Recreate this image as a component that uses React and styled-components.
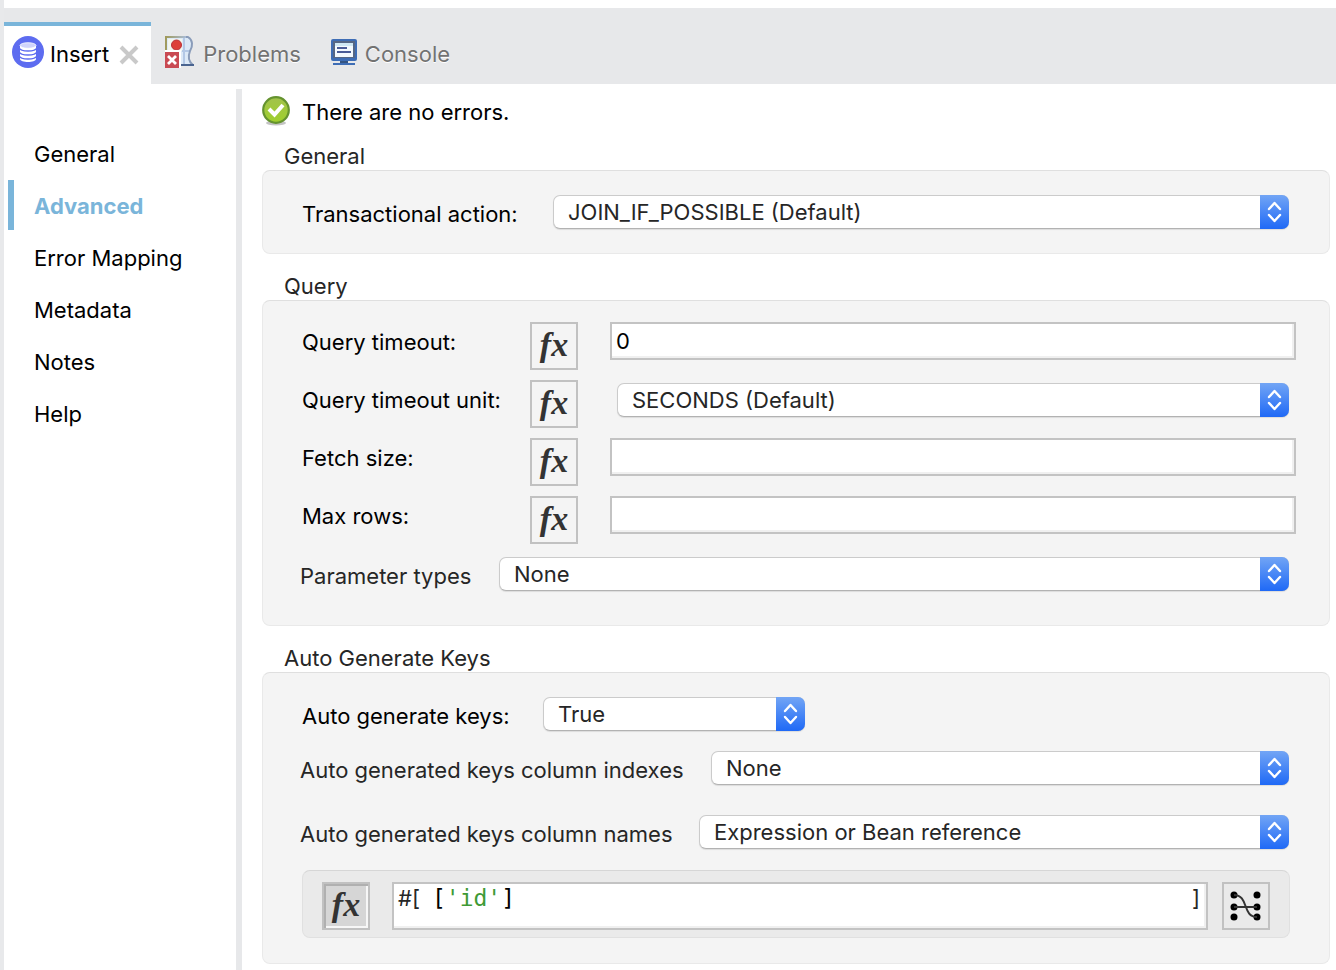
import React, { useId } from "react";
import styled, { createGlobalStyle, css } from "styled-components";

const GlobalStyle = createGlobalStyle`
  *, *::before, *::after { box-sizing: border-box; }
  html, body, #root { min-height: 100vh; }
  body {
    margin: 0;
    background: #fff;
    color: #000;
    font: 22px/28px Inter, "Liberation Sans", sans-serif;
  }
  button, input, select { font: inherit; color: inherit; margin: 0; }
`;

const Page = styled.div`
  display: flex;
  flex-direction: column;
  min-height: 100vh;
  padding-top: 8px;
  border-left: 4px solid #e8e9eb;
`;

const TabBar = styled.div`
  display: flex;
  align-items: flex-end;
  height: 76px;
  flex: none;
  background: #e7e8ea;
`;

const Tab = styled.div`
  display: flex;
  align-items: center;
  gap: 10px;
  height: 62px;
  padding: ${(p) => (p.$active ? "0 12px 6px 8px" : "0 16px 6px 14px")};
  border-top: 4px solid ${(p) => (p.$active ? "#7ab5da" : "transparent")};
  background: ${(p) => (p.$active ? "#fff" : "transparent")};
  svg { flex: none; }
`;

const TabButton = styled.button`
  display: flex;
  align-items: center;
  gap: ${(p) => (p.$active ? "6px" : "8px")};
  padding: 0;
  border: 0;
  background: none;
  color: ${(p) => (p.$active ? "#000" : "#727272")};
  text-shadow: ${(p) => (p.$active ? "none" : "0 1px 0 #fff")};
`;

const TabLabel = styled.span`
  padding-top: 4px;
`;

const CloseButton = styled.button`
  display: flex;
  padding: 6px 0 0;
  border: 0;
  background: none;
`;

const Body = styled.div`
  display: flex;
  flex: 1;
  padding-top: 5px;
`;

const Sidebar = styled.nav`
  display: flex;
  flex-direction: column;
  flex: none;
  gap: 2px;
  width: 232px;
  padding: 39px 4px 0;
`;

const NavLink = styled.a`
  height: 50px;
  padding: 12px 20px;
  border-left: 6px solid ${(p) => (p.$active ? "#7ab5da" : "transparent")};
  color: ${(p) => (p.$active ? "#7ab5da" : "#000")};
  font-weight: ${(p) => (p.$active ? 700 : 400)};
  text-decoration: none;
`;

const Content = styled.main`
  flex: 1;
  min-width: 0;
  padding: 6px 6px 6px 20px;
  border-left: 6px solid #e7e8ea;
`;

const Status = styled.p`
  display: flex;
  align-items: center;
  gap: 12px;
  height: 34px;
  margin: 0 0 11px;
  svg { flex: none; margin-bottom: 2px; }
`;

const Group = styled.fieldset`
  min-width: 0;
  margin: 0 0 16px;
  padding: 0;
  border: 0;
  &:last-child { margin-bottom: 0; }
`;

const GroupTitle = styled.legend`
  height: 30px;
  padding: 0 22px;
  color: #262626;
  line-height: 32px;
`;

const Panel = styled.div`
  display: flex;
  flex-direction: column;
  gap: ${(p) => p.$gap || 0}px;
  padding: ${(p) => p.$pad};
  border: 1px solid #e9e9e9;
  border-top-color: #dfdfdf;
  border-radius: 8px;
  background: #f4f4f4;
`;

const FxRows = styled.div`
  display: flex;
  flex-direction: column;
  gap: 10px;
`;

const Row = styled.div`
  display: flex;
  align-items: ${(p) => (p.$top ? "flex-start" : "center")};
  height: ${(p) => (p.$top ? 48 : 36)}px;
  margin-top: ${(p) => p.$before || 0}px;
  padding-right: ${(p) => (p.$wide ? 0 : 7)}px;
`;

const Label = styled.label`
  flex: none;
  width: ${(p) => p.$w}px;
  padding-left: ${(p) => (p.$soft ? 0 : 2)}px;
  padding-top: ${(p) => (p.$top ? 6 : 4)}px;
  color: ${(p) => (p.$soft ? "#262626" : "#000")};
  white-space: nowrap;
`;

const SelectWrap = styled.span`
  display: flex;
  position: relative;
  flex: ${(p) => (p.$w ? "none" : "1")};
  width: ${(p) => (p.$w ? p.$w + "px" : "auto")};
  min-width: 0;
  height: 34px;
  margin: ${(p) => (p.$inset ? "3px 7px 0 7px" : "0")};
`;

const NativeSelect = styled.select`
  appearance: none;
  width: 100%;
  height: 34px;
  padding: 0 40px 0 14px;
  border: 1px solid #cbcbcb;
  border-bottom-color: #b2b2b2;
  border-radius: 7px;
  background: #fff;
  box-shadow: 0 1px 1px #0000001a;
  color: #262626;
`;

const Stepper = styled.span`
  position: absolute;
  top: 0;
  right: 0;
  display: flex;
  align-items: center;
  justify-content: center;
  width: 29px;
  height: 34px;
  border-radius: 0 7px 7px 0;
  background: linear-gradient(#72a5f5, #1f69f6);
  pointer-events: none;
`;

const field = css`
  border: 2px solid #c3c3c3;
  background: #fff;
  box-shadow: inset -2px -2px 0 #f0f0f0;
`;

const TextInput = styled.input`
  flex: 1;
  min-width: 0;
  height: 38px;
  padding: 0 4px;
  border-radius: 0;
  ${field}
`;

const SquareButton = styled.button`
  display: flex;
  align-items: center;
  justify-content: center;
  flex: none;
  width: 48px;
  height: 48px;
  padding: 0;
  border: 2px solid #c1c1c1;
  background: ${(p) => (p.$pressed ? "#d6d6d6" : "transparent")};
  box-shadow: ${(p) => (p.$pressed ? "inset 2px 2px 0 #b0b0b0, inset -2px -2px 0 #f7f7f7" : "none")};
  color: #333;
  margin-right: ${(p) => p.$after || 0}px;
`;

const FxText = styled.span`
  padding-bottom: 2px;
  font: italic 700 34px/38px "Liberation Serif", serif;
`;

const ExpressionBar = styled.div`
  display: flex;
  align-items: center;
  height: 68px;
  margin: 2px 6px 0 2px;
  padding: 3px 19px 0;
  border: 1px solid #e0e0e0;
  border-top-color: #d6d6d6;
  border-radius: 8px;
  background: #eaeaea;
`;

const ExpressionField = styled.div`
  display: flex;
  flex: 1;
  min-width: 0;
  height: 48px;
  margin-right: 14px;
  padding: 0 6px 0 4px;
  color: #262626;
  ${field}
`;

const ExpressionCode = styled.code`
  flex: 1;
  padding-left: 12px;
  color: #000;
  font: 23px/28px "DejaVu Sans Mono", monospace;
`;

const StringToken = styled.span`
  color: #3f9a35;
`;

function FxButton({ pressed, after }) {
  return (
    <SquareButton type="button" aria-label="Toggle expression" $pressed={pressed} $after={after}>
      <FxText>fx</FxText>
    </SquareButton>
  );
}

function Select({ id, value, w, inset }) {
  return (
    <SelectWrap $w={w} $inset={inset}>
      <NativeSelect id={id} defaultValue={value}>
        <option>{value}</option>
      </NativeSelect>
      <Stepper>
        <svg width="15" height="22" viewBox="0 0 15 22" fill="none" stroke="#fff" strokeWidth="2.4" strokeLinecap="round" strokeLinejoin="round">
          <path d="M2 8 7.500 2 13 8M2 14 7.500 20 13 14" />
        </svg>
      </Stepper>
    </SelectWrap>
  );
}

function SelectRow({ label, labelWidth, value, w, soft, before }) {
  const id = useId();
  return (
    <Row $before={before}>
      <Label htmlFor={id} $w={labelWidth} $soft={soft}>{label}</Label>
      <Select id={id} value={value} w={w} />
    </Row>
  );
}

function FxRow({ label, value, select }) {
  const id = useId();
  return (
    <Row $top $wide>
      <Label htmlFor={id} $w={230} $top>{label}</Label>
      <FxButton after={32} />
      {select ? <Select id={id} value={value} inset /> : <TextInput id={id} defaultValue={value} />}
    </Row>
  );
}

const DatabaseIcon = () => (
  <svg width="32" height="32" viewBox="0 0 32 32">
    <circle cx="16" cy="16" r="16" fill="#5d6cf0" />
    <path d="M8 10v13c0 4 16 4 16 0V10z" fill="#fff" />
    <path d="M7 12c2 4 16 4 18 0M7 16c2 4 16 4 18 0M7 20c2 4 16 4 18 0" fill="none" stroke="#5d6cf0" strokeWidth="1.600" />
    <ellipse cx="16" cy="9.500" rx="8" ry="2.800" fill="#cfd3fb" stroke="#fff" strokeWidth=".8" />
  </svg>
);

const CloseIcon = () => (
  <svg width="20" height="20" viewBox="0 0 20 20" stroke="#c9c9c9" strokeWidth="4">
    <path d="M2 2 18 18M18 2 2 18" />
  </svg>
);

const ProblemsIcon = () => (
  <svg width="30" height="32" viewBox="0 0 30 32">
    <defs>
      <linearGradient id="problems-frame">
        <stop offset="0" stopColor="#a09a5c" />
        <stop offset="1" stopColor="#a9bcd6" />
      </linearGradient>
    </defs>
    <path d="M1 1h22c5 3 5 9 2 14-2 5-2 10 3 14H1z" fill="#dce9f7" />
    <path d="M3 3h14v12H3z" fill="#f3f6ee" />
    <path d="M19 2v27M17 15h8" stroke="#b3c8e6" strokeWidth="2" />
    <path d="M1 16V1h20" fill="none" stroke="url(#problems-frame)" strokeWidth="2" />
    <path d="M21 1h2c5 3 5 9 2 14-2 5-2 10 3 14" fill="none" stroke="#8a9cba" strokeWidth="2" />
    <path d="M16 29h13" stroke="#4a6490" strokeWidth="2" />
    <circle cx="11.500" cy="9" r="5" fill="#dd3f38" stroke="#b8323a" />
    <path d="M0 14h16v18H0z" fill="#fff" />
    <path d="M0 16h14v16H0z" fill="#c94a53" />
    <path d="m3 20 8 8M11 20l-8 8" stroke="#fff" strokeWidth="2.800" />
  </svg>
);

const ConsoleIcon = () => (
  <svg width="26" height="26" viewBox="0 0 26 26">
    <rect width="26" height="22" rx="2" fill="#3e6db5" />
    <rect x="2" y="2" width="22" height="17" fill="#566785" />
    <rect x="4" y="4" width="18" height="14" fill="#f4faff" />
    <path d="M4 4h18v3H4z" fill="#cfe8f5" />
    <path d="M6 9h10M6 13h14" stroke="#4a5c98" strokeWidth="2" />
    <path d="M9 22h8v2H9z" fill="#345482" />
    <path d="M2 24h22v2H2z" fill="#3e6db5" />
  </svg>
);

const OkIcon = () => (
  <svg width="28" height="30" viewBox="0 0 28 30">
    <defs>
      <linearGradient id="ok" x1="0" y1="0" x2="0" y2="1">
        <stop offset="0" stopColor="#a2c24c" />
        <stop offset="1" stopColor="#9fd02c" />
      </linearGradient>
    </defs>
    <ellipse cx="14" cy="27" rx="10" ry="2.500" fill="#c4c4c4" />
    <circle cx="14" cy="14" r="12.800" fill="url(#ok)" stroke="#65932f" strokeWidth="2.200" />
    <path d="m7 13 5.500 5.500L21 9" fill="none" stroke="#fff" strokeWidth="4" />
  </svg>
);

const MapIcon = () => (
  <svg width="34" height="34" viewBox="0 0 34 34">
    <g fill="#000">
      {[6, 18, 28].map((y) => (
        <g key={y}>
          <circle cx="5" cy={y} r="3.500" />
          <circle cx="28" cy={y} r="3.500" />
        </g>
      ))}
    </g>
    <path d="M5 6c15 0 8 22 23 22M5 18h23" fill="none" stroke="#333" strokeWidth="2" />
  </svg>
);

const navItems = ["General", "Advanced", "Error Mapping", "Metadata", "Notes", "Help"];

export default function App() {
  return (
    <>
      <GlobalStyle />
      <Page>
        <TabBar>
          <Tab $active>
            <TabButton type="button" $active><DatabaseIcon /><TabLabel>Insert</TabLabel></TabButton>
            <CloseButton type="button" aria-label="Close Insert"><CloseIcon /></CloseButton>
          </Tab>
          <Tab>
            <TabButton type="button"><ProblemsIcon /><TabLabel>Problems</TabLabel></TabButton>
          </Tab>
          <Tab>
            <TabButton type="button"><ConsoleIcon /><TabLabel>Console</TabLabel></TabButton>
          </Tab>
        </TabBar>
        <Body>
          <Sidebar>
            {navItems.map((name) => (
              <NavLink key={name} href="#" $active={name === "Advanced"}>{name}</NavLink>
            ))}
          </Sidebar>
          <Content>
            <Status><OkIcon />There are no errors.</Status>
            <Group>
              <GroupTitle>General</GroupTitle>
              <Panel $pad="23px 33px 23px 37px">
                <SelectRow label="Transactional action:" labelWidth={253} value="JOIN_IF_POSSIBLE (Default)" />
              </Panel>
            </Group>
            <Group>
              <GroupTitle>Query</GroupTitle>
              <Panel $gap={12} $pad="21px 33px 33px 37px">
                <FxRows>
                  <FxRow label="Query timeout:" value="0" />
                  <FxRow label="Query timeout unit:" value="SECONDS (Default)" select />
                  <FxRow label="Fetch size:" value="" />
                  <FxRow label="Max rows:" value="" />
                </FxRows>
                <SelectRow soft label="Parameter types" labelWidth={199} value="None" />
              </Panel>
            </Group>
            <Group>
              <GroupTitle>Auto Generate Keys</GroupTitle>
              <Panel $gap={18} $pad="23px 33px 25px 37px">
                <SelectRow label="Auto generate keys:" labelWidth={243} value="True" w={262} />
                <SelectRow soft label="Auto generated keys column indexes" labelWidth={411} value="None" />
                <SelectRow soft before={10} label="Auto generated keys column names" labelWidth={399} value="Expression or Bean reference" />
                <ExpressionBar>
                  <FxButton pressed after={22} />
                  <ExpressionField>
                    <span>#[</span>
                    <ExpressionCode>[<StringToken>'id'</StringToken>]</ExpressionCode>
                    <span>]</span>
                  </ExpressionField>
                  <SquareButton type="button" aria-label="Open mapping"><MapIcon /></SquareButton>
                </ExpressionBar>
              </Panel>
            </Group>
          </Content>
        </Body>
      </Page>
    </>
  );
}
